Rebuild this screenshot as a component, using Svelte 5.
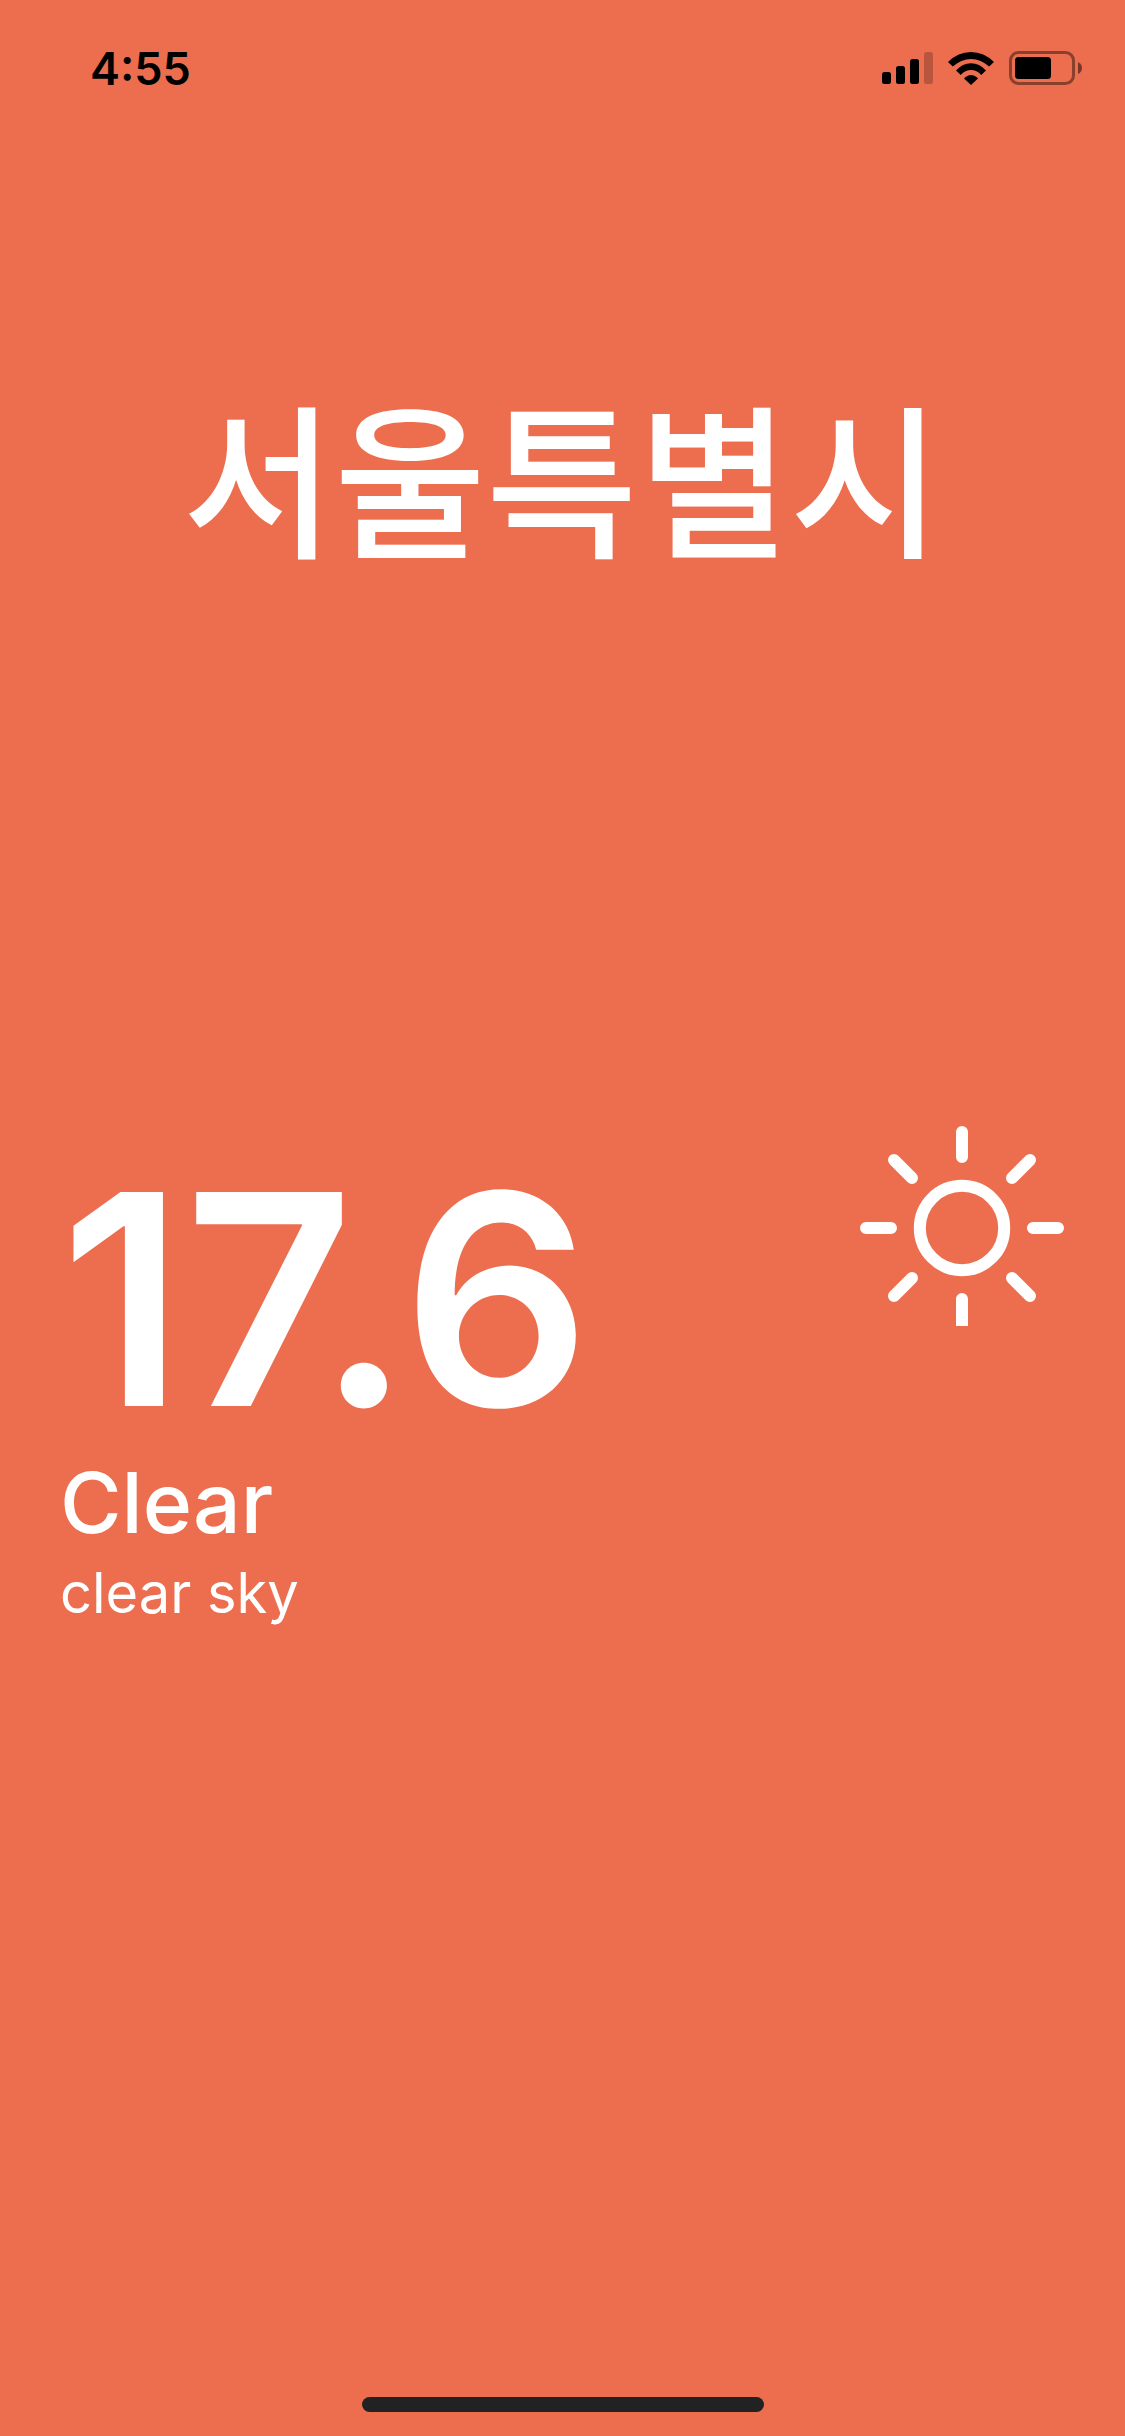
<script>
  const weather = {
    city: '서울특별시',
    temperature: 17.6,
    main: 'Clear',
    description: 'clear sky'
  };
  const time = '4:55';
</script>

<div class="screen">
  <header class="status">
    <time class="clock">{time}</time>
    <div class="indicators">
      <svg width="51" height="32" viewBox="0 0 51 32" role="img" aria-label="Signal">
        <rect x="0" y="20" width="9" height="12" rx="2.5" />
        <rect x="14" y="14" width="9" height="18" rx="2.5" />
        <rect x="28" y="7" width="9" height="25" rx="2.5" />
        <rect x="42" y="0" width="9" height="32" rx="2.5" opacity="0.22" />
      </svg>
      <svg width="46" height="33" viewBox="0 0 46 33" role="img" aria-label="Wi-Fi">
        <path d="M0 10 Q10 0 23 0 T46 10 L41.200 14.600 Q33 6.900 23 6.900 T4.800 14.600 Z" />
        <path d="M8 18.500 Q14.500 11.200 23 11.200 T38 18.500 L33.200 23 Q29 18 23 18 T12.800 23 Z" />
        <path d="M16 26.500 Q19 23 23 23 T30 26.500 L23 33 Z" />
      </svg>
      <svg width="73" height="34" viewBox="0 0 73 34" role="img" aria-label="Battery">
        <rect x="1.500" y="1.500" width="63" height="31" rx="8" fill="none" stroke="#000" stroke-width="3" opacity="0.42" />
        <rect x="6" y="6" width="36" height="22" rx="3.500" />
        <path d="M69 11 Q73 13 73 17 T69 23 Z" opacity="0.5" />
      </svg>
    </div>
  </header>

  <main>
    <section class="place">
      <h1>{weather.city}</h1>
    </section>
    <section class="weather">
      <div class="info">
        <p class="temp">{weather.temperature}</p>
        <p class="main">{weather.main}</p>
        <p class="desc">{weather.description}</p>
      </div>
      <svg class="sun" width="204" height="200" viewBox="0 0 204 200" role="img" aria-label="Sunny">
        <circle cx="102" cy="102" r="42.200" />
        <path d="M102 6V31M102 173V210M6 102H31M173 102H198M34 34L52 52M152 52L170 34M34 170L52 152M152 152L170 170" />
      </svg>
    </section>
  </main>

  <footer><div class="home"></div></footer>
</div>

<style>
  :global(body) {
    margin: 0;
    background: #ec6e4f;
  }
  .screen {
    min-height: 100vh;
    display: flex;
    flex-direction: column;
    background: #ec6e4f;
    color: #fff;
    font-family: Inter, "Noto Sans CJK KR", sans-serif;
  }
  h1,
  p {
    margin: 0;
  }
  .status {
    box-sizing: border-box;
    height: 132px;
    padding: 41px 43px 0 90px;
    display: flex;
    justify-content: space-between;
    align-items: flex-start;
    color: #000;
  }
  .clock {
    font-size: 45px;
    line-height: 56px;
    font-weight: 600;
  }
  .indicators {
    display: flex;
    align-items: center;
    gap: 15px;
    padding-top: 10px;
  }
  main {
    flex: 1;
  }
  .place {
    padding: 222px 61px 0 60px;
    text-align: center;
  }
  h1 {
    font-family: "Noto Sans CJK KR", sans-serif;
    font-size: 165px;
    line-height: 240px;
    font-weight: 500;
  }
  .weather {
    padding: 532px 61px 0 60px;
    display: flex;
    justify-content: space-between;
    align-items: flex-start;
  }
  .info {
    padding-top: 23px;
  }
  .temp {
    font-size: 294px;
    line-height: 300px;
    font-weight: 600;
    padding-bottom: 4px;
  }
  .main {
    font-size: 84px;
    line-height: 100px;
    font-weight: 500;
  }
  .desc {
    font-size: 56px;
    line-height: 80px;
  }
  .sun {
    flex: none;
    overflow: hidden;
    fill: none;
    stroke: #fff;
    stroke-width: 12;
    stroke-linecap: round;
  }
  footer {
    display: flex;
    justify-content: center;
    padding-bottom: 24px;
  }
  .home {
    width: 402px;
    height: 15px;
    border-radius: 8px;
    background: #222;
  }
</style>
